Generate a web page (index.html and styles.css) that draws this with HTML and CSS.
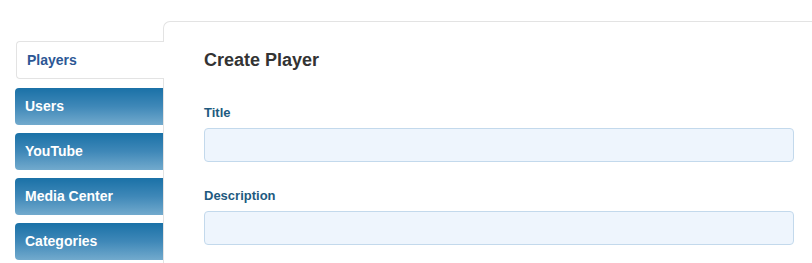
FILE: index.html
```html
<!DOCTYPE html>
<html>
<head>
<meta charset="utf-8">
<link rel="stylesheet" href="styles.css">
</head>
<body>
<div class="layout">
  <nav class="sidebar">
    <a class="tab tab-active">Players</a>
    <a class="tab">Users</a>
    <a class="tab">YouTube</a>
    <a class="tab">Media Center</a>
    <a class="tab">Categories</a>
  </nav>
  <main class="panel">
    <h2 class="panel-title">Create Player</h2>
    <div class="field">
      <label class="field-label">Title</label>
      <input class="field-input" type="text">
    </div>
    <div class="field field-last">
      <label class="field-label">Description</label>
      <input class="field-input" type="text">
    </div>
  </main>
</div>
</body>
</html>
```

FILE: styles.css
```css
html, body {
  margin: 0;
  padding: 0;
  background: #ffffff;
  font-family: "Liberation Sans", Arial, sans-serif;
  overflow: hidden;
}

.layout {
  display: flex;
  align-items: stretch;
  height: 263px;
  box-sizing: border-box;
  padding-top: 21px;
}

.sidebar {
  width: 148px;
  margin-left: 15px;
  padding-top: 20px;
  display: flex;
  flex-direction: column;
  gap: 8px;
  flex-shrink: 0;
}

.tab {
  display: block;
  height: 37px;
  line-height: 37px;
  padding-left: 10px;
  border-radius: 4px 0 0 4px;
  background: linear-gradient(to bottom, #1a71a7 0%, #3f88b8 50%, #72aacd 100%);
  color: #ffffff;
  font-size: 14px;
  font-weight: bold;
  text-decoration: none;
  white-space: nowrap;
  flex-shrink: 0;
}

.tab-active {
  position: relative;
  z-index: 1;
  height: 36px;
  line-height: 36px;
  margin-left: 1px;
  margin-right: -1px;
  margin-bottom: 1px;
  border: 1px solid #e3e3e3;
  border-right: none;
  background: #ffffff;
  color: #2c5795;
}

.panel {
  flex: 1;
  border-top: 1px solid #e3e3e3;
  border-left: 1px solid #e3e3e3;
  border-top-left-radius: 7px;
  padding: 27px 18px 0 40px;
  box-sizing: border-box;
  overflow: hidden;
}

.panel-title {
  margin: 0 0 34px 0;
  font-size: 18px;
  line-height: 22px;
  font-weight: bold;
  color: #333333;
}

.field {
  display: flex;
  flex-direction: column;
  margin-bottom: 26px;
}

.field-last {
  margin-bottom: 0;
}

.field-label {
  font-size: 13px;
  line-height: 16px;
  font-weight: bold;
  color: #1d5a80;
  margin-bottom: 7px;
}

.field-input {
  box-sizing: border-box;
  width: 100%;
  height: 34px;
  margin: 0;
  border: 1px solid #c3d9ec;
  border-radius: 4px;
  background: #eef5fd;
  outline: none;
}
```
